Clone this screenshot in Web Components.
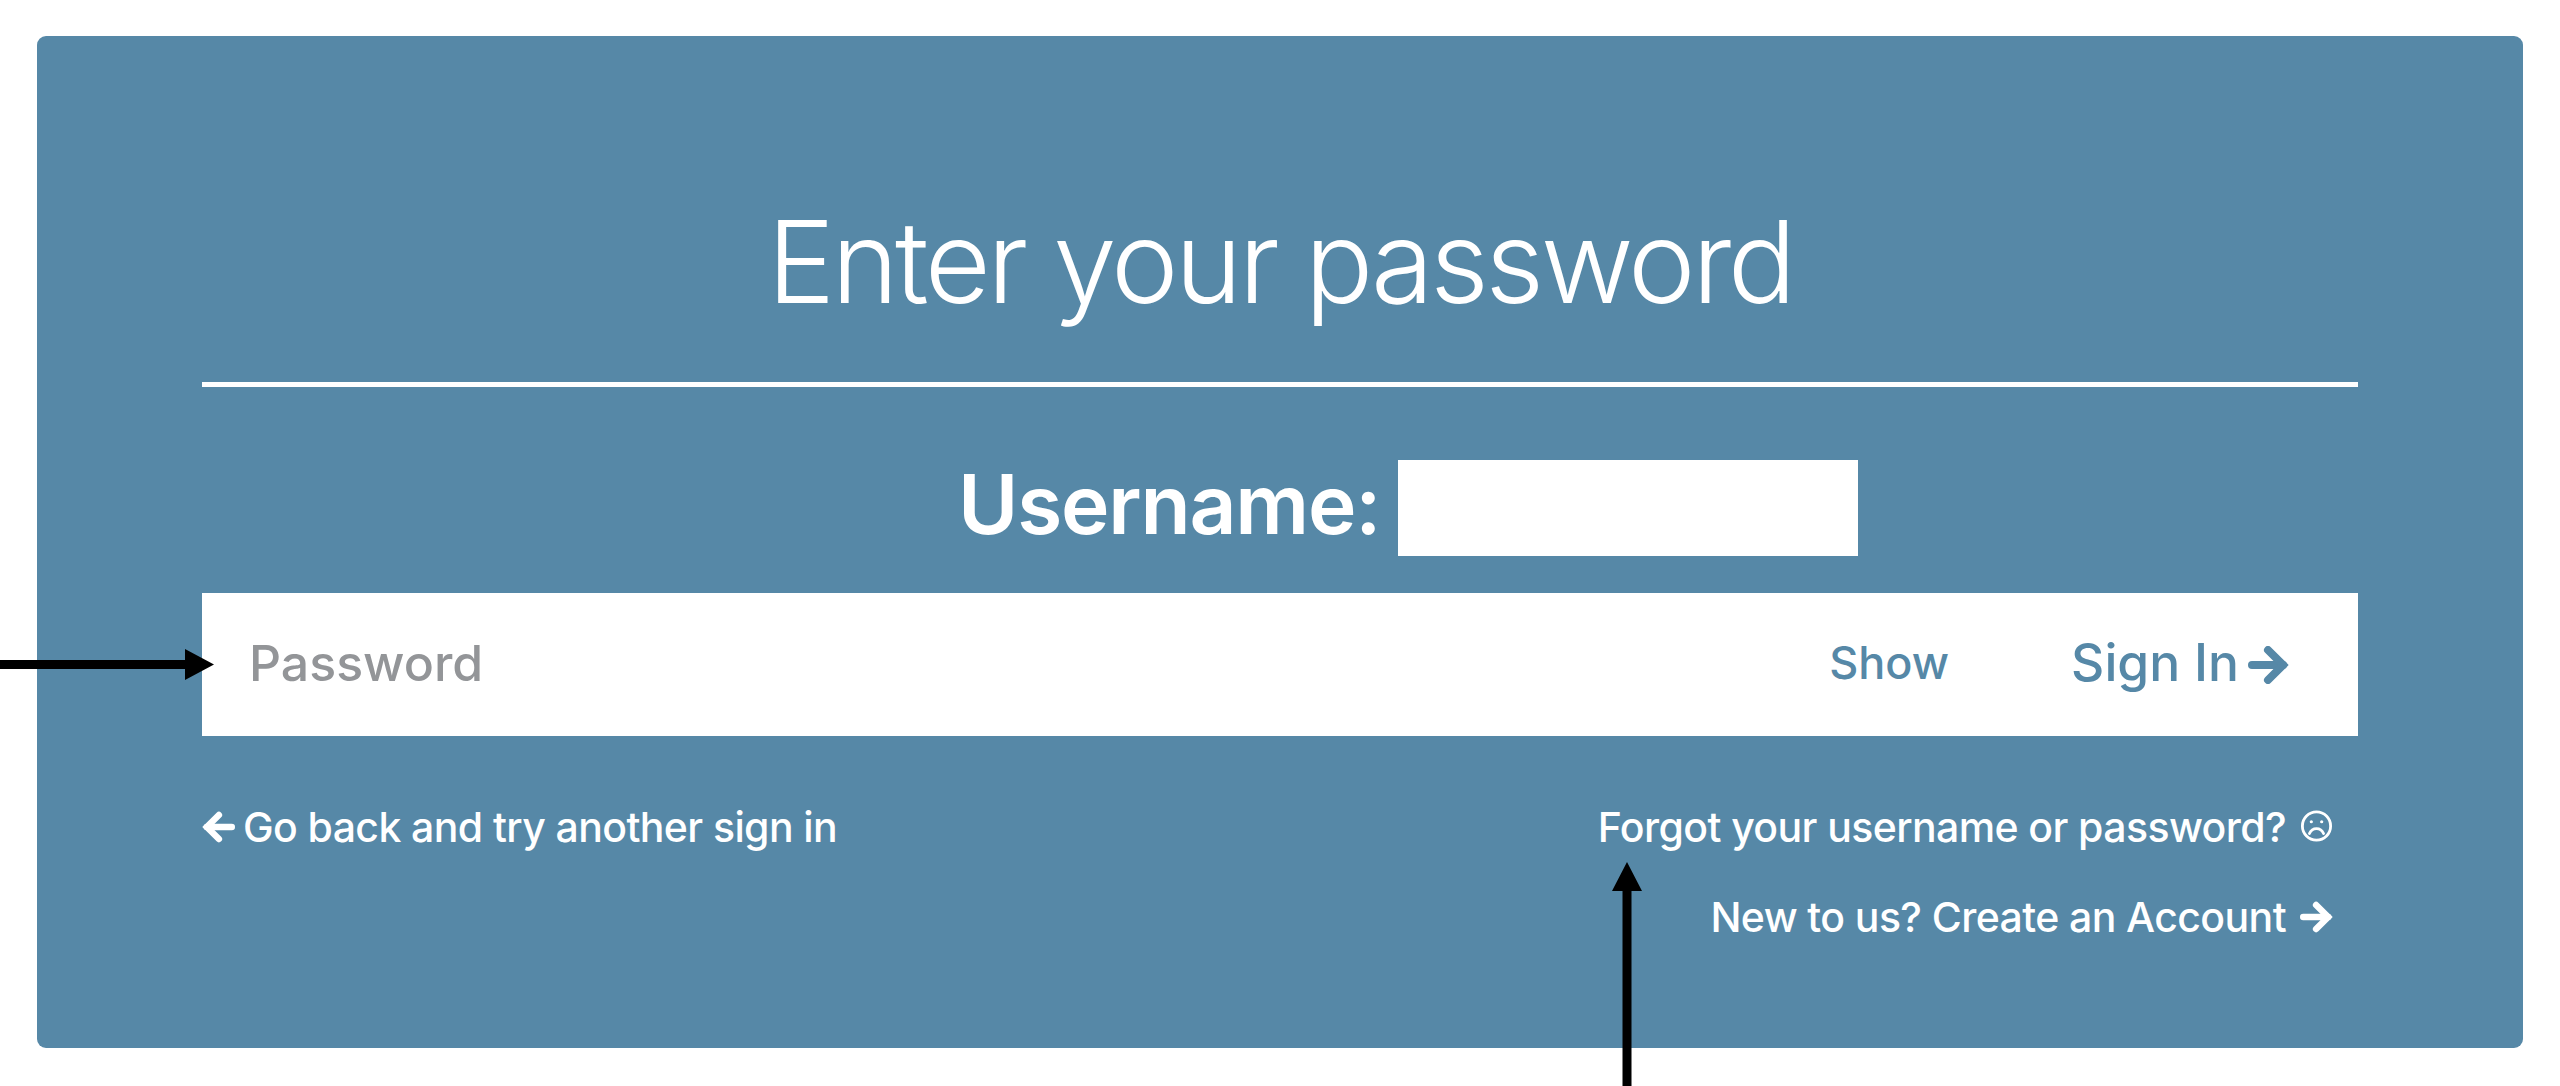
<!DOCTYPE html>
<html lang="en">
<head>
<meta charset="utf-8">
<title>Enter your password</title>
<style>
  html, body { margin: 0; background: #fff; }
  body { position: relative; height: 1086px; overflow: hidden; font-family: Inter, "Liberation Sans", sans-serif; }
</style>
</head>
<body>
<login-card>
  <login-heading>Enter your password</login-heading>
  <username-row label="Username:"></username-row>
  <password-field></password-field>
  <login-links></login-links>
</login-card>
<callout-arrow dir="right"></callout-arrow>
<callout-arrow dir="up"></callout-arrow>

<script>
const RIGHT_ARROW = `<svg viewBox="0 0 41 38" width="41" height="38" fill="none" stroke="currentColor" stroke-width="8" stroke-linecap="round"><path d="M4 19H35"/><path stroke-linejoin="miter" d="M20 4 35 19 20 34"/></svg>`;

class LoginCard extends HTMLElement {
  constructor() {
    super();
    this.attachShadow({ mode: 'open' }).innerHTML = `
      <style>
        :host {
          display: block;
          box-sizing: border-box;
          width: 2486px;
          height: 1012px;
          margin: 36px 0 0 37px;
          padding: 0 165px;
          background: #5688a7;
          border-radius: 9px;
          color: #fff;
        }
      </style>
      <slot></slot>`;
  }
}

class LoginHeading extends HTMLElement {
  constructor() {
    super();
    this.attachShadow({ mode: 'open' }).innerHTML = `
      <style>
        :host {
          display: block;
          box-sizing: border-box;
          height: 351px;
          padding-top: 156px;
          border-bottom: 5px solid #fff;
          text-align: center;
          font-size: 114px;
          font-weight: 300;
          line-height: 140px;
          letter-spacing: -3.5px;
        }
      </style>
      <slot></slot>`;
  }
}

class UsernameRow extends HTMLElement {
  constructor() {
    super();
    this.attachShadow({ mode: 'open' }).innerHTML = `
      <style>
        :host {
          display: flex;
          align-items: center;
          gap: 18px;
          height: 96px;
          margin: 73px 0 37px;
          padding-left: 756px;
          font-size: 82px;
          font-weight: 600;
          letter-spacing: -1.2px;
        }
        .label { margin-top: -8px; }
        .mask { width: 460px; height: 96px; background: #fff; }
      </style>
      <span class="label">${this.getAttribute('label')}</span>
      <div class="mask"></div>`;
  }
}

class PasswordField extends HTMLElement {
  constructor() {
    super();
    this.attachShadow({ mode: 'open' }).innerHTML = `
      <style>
        :host {
          display: flex;
          align-items: center;
          height: 143px;
          padding: 0 69px 0 47px;
          background: #fff;
          font-weight: 500;
        }
        .placeholder { flex: 1; font-size: 50px; color: #939598; margin-top: -4px; }
        .show { font-size: 45px; color: #5688a7; margin: -4px 122px 0 0; }
        .submit { display: flex; align-items: center; gap: 9px; font-size: 51.500px; color: #5688a7; }
        .submit span { margin-top: -5px; }
      </style>
      <span class="placeholder">Password</span>
      <span class="show">Show</span>
      <span class="submit"><span>Sign In</span>${RIGHT_ARROW}</span>`;
  }
}

class LoginLinks extends HTMLElement {
  constructor() {
    super();
    this.attachShadow({ mode: 'open' }).innerHTML = `
      <style>
        :host {
          display: flex;
          justify-content: space-between;
          padding: 61px 25px 0 0;
          font-size: 41px;
          font-weight: 500;
          line-height: 60px;
          letter-spacing: -0.6px;
        }
        .back, .link { display: flex; align-items: center; }
        .back { gap: 8px; height: 60px; }
        .back svg { transform: scaleX(-1); width: 33px; height: 32px; }
        .right { display: grid; gap: 30px; justify-items: end; }
        .link { gap: 14px; }
        .link svg { width: 33px; height: 32px; }
      </style>
      <div class="back">${RIGHT_ARROW}<span>Go back and try another sign in</span></div>
      <div class="right">
        <div class="link">
          <span>Forgot your username or password?</span>
          <svg viewBox="0 0 34 34" fill="none" stroke="currentColor" stroke-width="3" stroke-linecap="round" style="margin-top:-3px">
            <circle cx="17" cy="17" r="15"/>
            <circle cx="11.5" cy="12.5" r="1.700" fill="currentColor" stroke="none"/>
            <circle cx="22.5" cy="12.5" r="1.700" fill="currentColor" stroke="none"/>
            <path d="M9.500 25c1.600-3.600 4.200-5.200 7.500-5.200s5.900 1.600 7.500 5.200"/>
          </svg>
        </div>
        <div class="link"><span>New to us? Create an Account</span>${RIGHT_ARROW}</div>
      </div>`;
  }
}

// annotation arrows drawn over the screenshot, not part of the form
class CalloutArrow extends HTMLElement {
  constructor() {
    super();
    const up = this.getAttribute('dir') === 'up';
    this.attachShadow({ mode: 'open' }).innerHTML = `
      <style>
        :host { position: absolute; display: block; line-height: 0; color: #000; }
        :host([dir="right"]) { left: 0; top: 649px; }
        :host([dir="up"]) { left: 1611px; top: 862px; }
      </style>
      ${up
        ? `<svg width="32" height="224"><path fill="currentColor" d="M16 0 31 29H20.500V224H11.500V29H1Z"/></svg>`
        : `<svg width="214" height="32"><path fill="currentColor" d="M0 11H185V0L214 15.500 185 31V20H0Z"/></svg>`}`;
  }
}

customElements.define('login-card', LoginCard);
customElements.define('login-heading', LoginHeading);
customElements.define('username-row', UsernameRow);
customElements.define('password-field', PasswordField);
customElements.define('login-links', LoginLinks);
customElements.define('callout-arrow', CalloutArrow);
</script>
</body>
</html>
